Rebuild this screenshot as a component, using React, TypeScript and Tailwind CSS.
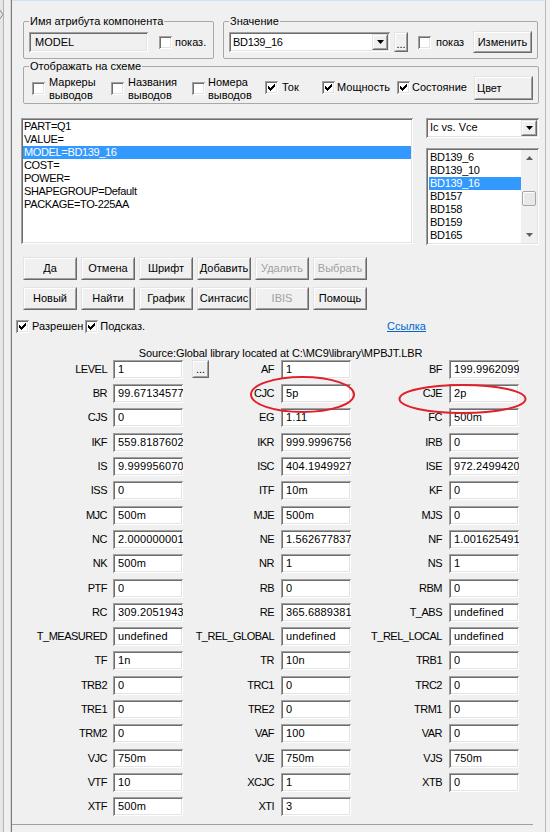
import React from "react";

const SUNKEN =
  "shadow-[inset_1px_1px_#a0a0a0,inset_-1px_-1px_#ffffff,inset_2px_2px_#6e6e6e,inset_-2px_-2px_#e3e3e3]";

const CHECK_PIXELS: [number, number, number][] = [
  [6, 0, 1],
  [5, 1, 2],
  [0, 2, 1],
  [4, 2, 3],
  [0, 3, 2],
  [3, 3, 3],
  [0, 4, 5],
  [1, 5, 3],
  [2, 6, 1],
];

function CheckBox({ checked = false }: { checked?: boolean }) {
  return (
    <div className={`w-[13px] h-[13px] shrink-0 bg-white relative ${SUNKEN}`}>
      {checked && (
        <svg
          className="absolute left-[3px] top-[3px]"
          width="7"
          height="7"
          viewBox="0 0 7 7"
          shapeRendering="crispEdges"
        >
          {CHECK_PIXELS.map(([x, y, w], i) => (
            <rect key={i} x={x} y={y} width={w} height={1} fill="#000" />
          ))}
        </svg>
      )}
    </div>
  );
}

/* Classic raised 3D frame drawn with two nested borders */
function Raised({
  className,
  inner = "",
  children,
}: {
  className: string;
  inner?: string;
  children?: React.ReactNode;
}) {
  return (
    <div
      className={`shrink-0 bg-[#f0f0f0] border border-t-[#e3e3e3] border-l-[#e3e3e3] border-b-[#696969] border-r-[#696969] ${className}`}
    >
      <div
        className={`w-full h-full border border-t-white border-l-white border-b-[#a0a0a0] border-r-[#a0a0a0] ${inner}`}
      >
        {children}
      </div>
    </div>
  );
}

function DropBtn() {
  return (
    <Raised className="w-[16px] h-[16px]" inner="flex items-center justify-center">
      <svg width="7" height="4" viewBox="0 0 7 4">
        <path d="M0 0h7L3.5 4z" fill="#000" />
      </svg>
    </Raised>
  );
}

function Btn({
  label,
  disabled = false,
}: {
  label: string;
  disabled?: boolean;
}) {
  return (
    <Raised
      className="w-[54px] h-[23px]"
      inner={`text-center leading-[19px] ${disabled ? "text-[#a0a0a0]" : "text-black"}`}
    >
      {label}
    </Raised>
  );
}

function Field({ value }: { value: string }) {
  return (
    <div
      className={`h-[19px] bg-white ${SUNKEN} pl-[5px] pr-[2px] leading-[19px] overflow-hidden whitespace-nowrap tracking-[0.15px]`}
    >
      {value}
    </div>
  );
}

type Cell = [string, string] | null;

const ROWS: Cell[][] = [
  [["LEVEL", "1"], ["AF", "1"], ["BF", "199.9962099"]],
  [["BR", "99.67134577"], ["CJC", "5p"], ["CJE", "2p"]],
  [["CJS", "0"], ["EG", "1.11"], ["FC", "500m"]],
  [["IKF", "559.8187602"], ["IKR", "999.9996756"], ["IRB", "0"]],
  [["IS", "9.999956070"], ["ISC", "404.1949927"], ["ISE", "972.2499420"]],
  [["ISS", "0"], ["ITF", "10m"], ["KF", "0"]],
  [["MJC", "500m"], ["MJE", "500m"], ["MJS", "0"]],
  [["NC", "2.000000001"], ["NE", "1.562677837"], ["NF", "1.001625491"]],
  [["NK", "500m"], ["NR", "1"], ["NS", "1"]],
  [["PTF", "0"], ["RB", "0"], ["RBM", "0"]],
  [["RC", "309.2051943"], ["RE", "365.6889381"], ["T_ABS", "undefined"]],
  [
    ["T_MEASURED", "undefined"],
    ["T_REL_GLOBAL", "undefined"],
    ["T_REL_LOCAL", "undefined"],
  ],
  [["TF", "1n"], ["TR", "10n"], ["TRB1", "0"]],
  [["TRB2", "0"], ["TRC1", "0"], ["TRC2", "0"]],
  [["TRE1", "0"], ["TRE2", "0"], ["TRM1", "0"]],
  [["TRM2", "0"], ["VAF", "100"], ["VAR", "0"]],
  [["VJC", "750m"], ["VJE", "750m"], ["VJS", "750m"]],
  [["VTF", "10"], ["XCJC", "1"], ["XTB", "0"]],
  [["XTF", "500m"], ["XTI", "3"], null],
];

const ATTRS = [
  "PART=Q1",
  "VALUE=",
  "MODEL=BD139_16",
  "COST=",
  "POWER=",
  "SHAPEGROUP=Default",
  "PACKAGE=TO-225AA",
];

const MODELS = [
  "BD139_6",
  "BD139_10",
  "BD139_16",
  "BD157",
  "BD158",
  "BD159",
  "BD165",
];

export default function App() {
  return (
    <div className="w-[550px] h-[832px] bg-[#f0f0f0] relative overflow-hidden flex font-['Liberation_Sans',Arial,sans-serif] text-[11px] leading-[13px] text-black">
      {/* left splitter strip */}
      <div className="w-[12px] shrink-0 flex">
        <div className="w-[4px] bg-[#e6e6e6] border-r border-[#b4b4b4] flex flex-col">
          <svg width="3" height="32" viewBox="0 0 3 32">
            <path d="M-1 9L3 14.5L-1 20" fill="none" stroke="#8a8a8a" strokeWidth="1" />
          </svg>
        </div>
        <div className="flex-1" />
        <div className="w-[1px] bg-[#d8d8d8]" />
        <div className="w-[1px] bg-[#7a7a7a]" />
      </div>

      {/* main dialog */}
      <div className="w-[534px] shrink-0 flex flex-col border-t border-[#cfe3f3] border-r border-r-[#b8b8b8]">
        {/* Row A */}
        <div className="flex mt-[14px] ml-[11px]">
          <fieldset className="w-[191px] h-[44px] border border-[#a8a8a8] rounded-[2px] px-[5px] pt-[4px]">
            <legend className="px-[1px] leading-[13px]">Имя атрибута компонента</legend>
            <div className="flex items-center">
              <div
                className={`w-[119px] h-[20px] bg-[#f0f0f0] ${SUNKEN} pl-[6px] leading-[20px]`}
              >
                MODEL
              </div>
              <div className="ml-[11px]">
                <CheckBox />
              </div>
              <span className="ml-[3px]">показ.</span>
            </div>
          </fieldset>
          <fieldset className="ml-[9px] w-[315px] h-[44px] border border-[#a8a8a8] rounded-[2px] px-[5px] pt-[3px]">
            <legend className="px-[1px] leading-[13px]">Значение</legend>
            <div className="flex items-start">
              <div
                className={`w-[161px] h-[20px] bg-white ${SUNKEN} pl-[4px] pr-[2px] flex items-center mt-[1px]`}
              >
                <span className="tracking-[-0.3px]">BD139_16</span>
                <div className="ml-auto">
                  <DropBtn />
                </div>
              </div>
              <Raised
                className="ml-[4px] mt-[1px] w-[14px] h-[20px]"
                inner="flex items-end justify-center pb-[2px] leading-[8px]"
              >
                ...
              </Raised>
              <div className="ml-[10px] mt-[5px]">
                <CheckBox />
              </div>
              <span className="ml-[5px] mt-[5px]">показ</span>
              <Raised className="ml-auto w-[59px] h-[22px]" inner="text-center leading-[18px]">
                Изменить
              </Raised>
            </div>
          </fieldset>
        </div>

        {/* Row B */}
        <fieldset className="mt-[1px] ml-[11px] w-[515px] h-[45px] border border-[#a8a8a8] rounded-[2px] pl-[8px] pr-[5px] pt-[3px]">
          <legend className="ml-[-3px] px-[1px] leading-[13px]">Отображать на схеме</legend>
          <div className="flex items-start h-[24px]">
            <div className="w-[79px] flex items-start">
              <div className="mt-[6px]">
                <CheckBox />
              </div>
              <span className="ml-[4px] leading-[13px]">
                Маркеры
                <br />
                выводов
              </span>
            </div>
            <div className="w-[81px] flex items-start">
              <div className="mt-[6px]">
                <CheckBox />
              </div>
              <span className="ml-[4px] leading-[13px]">
                Названия
                <br />
                выводов
              </span>
            </div>
            <div className="w-[73px] flex items-start">
              <div className="mt-[6px]">
                <CheckBox />
              </div>
              <span className="ml-[3px] leading-[13px]">
                Номера
                <br />
                выводов
              </span>
            </div>
            <div className="w-[57px] flex items-center mt-[5px] h-[13px]">
              <CheckBox checked />
              <span className="ml-[4px]">Ток</span>
            </div>
            <div className="w-[75px] flex items-center mt-[5px] h-[13px]">
              <CheckBox checked />
              <span className="ml-[2px]">Мощность</span>
            </div>
            <div className="w-[77px] flex items-center mt-[5px] h-[13px]">
              <CheckBox checked />
              <span className="ml-[2px]">Состояние</span>
            </div>
            <Raised className="w-[59px] h-[24px]" inner="pl-[1px] pt-[4px] leading-[13px]">
              Цвет
            </Raised>
          </div>
        </fieldset>

        {/* Row C: lists */}
        <div className="flex mt-[14px] ml-[9px]">
          <div className={`w-[392px] h-[126px] bg-white ${SUNKEN} p-[2px]`}>
            {ATTRS.map((a, i) => (
              <div
                key={a}
                className={`h-[13px] pl-[1px] whitespace-nowrap tracking-[-0.35px] ${
                  i === 2 ? "bg-[#3399ff] text-white" : ""
                }`}
              >
                {a}
              </div>
            ))}
          </div>
          <div className="ml-[13px] w-[113px] flex flex-col">
            <div
              className={`h-[20px] bg-white ${SUNKEN} pl-[4px] pr-[2px] flex items-center`}
            >
              <span>Ic vs. Vce</span>
              <div className="ml-auto">
                <DropBtn />
              </div>
            </div>
            <div className={`mt-[10px] h-[97px] bg-white ${SUNKEN} p-[2px] flex`}>
              <div className="flex-1 pt-[1px] pl-[1px]">
                {MODELS.map((m, i) => (
                  <div
                    key={m}
                    className={`h-[13px] pl-[1px] whitespace-nowrap tracking-[-0.3px] ${
                      i === 2 ? "bg-[#3399ff] text-white" : ""
                    }`}
                  >
                    {m}
                  </div>
                ))}
              </div>
              <div className="w-[16px] bg-[#f0f0f0] flex flex-col">
                <div className="h-[16px] flex items-center justify-center">
                  <svg width="7" height="4" viewBox="0 0 7 4">
                    <path d="M3.5 0L7 4H0z" fill="#606060" />
                  </svg>
                </div>
                <div className="h-[25px]" />
                <div className="h-[15px] mx-[1px] bg-[#e8e8e8] border border-[#a6a6a6] rounded-[2px] shadow-[inset_1px_1px_#ffffff]" />
                <div className="flex-1" />
                <div className="h-[16px] flex items-center justify-center">
                  <svg width="7" height="4" viewBox="0 0 7 4">
                    <path d="M0 0h7L3.5 4z" fill="#606060" />
                  </svg>
                </div>
              </div>
            </div>
          </div>
        </div>

        {/* Row D: buttons */}
        <div className="flex gap-[4px] mt-[12px] ml-[11px]">
          <Btn label="Да" />
          <Btn label="Отмена" />
          <Btn label="Шрифт" />
          <Btn label="Добавить" />
          <Btn label="Удалить" disabled />
          <Btn label="Выбрать" disabled />
        </div>
        <div className="flex gap-[4px] mt-[7px] ml-[11px]">
          <Btn label="Новый" />
          <Btn label="Найти" />
          <Btn label="График" />
          <Btn label="Синтасис" />
          <Btn label="IBIS" disabled />
          <Btn label="Помощь" />
        </div>

        {/* Row E */}
        <div className="flex items-center h-[13px] mt-[10px]">
          <div className="w-[375px] flex items-center pl-[4px]">
            <CheckBox checked />
            <span className="ml-[3px]">Разрешен</span>
            <div className="ml-[2px]">
              <CheckBox checked />
            </div>
            <span className="ml-[2px]">Подсказ.</span>
          </div>
          <span className="text-[#0066cc] underline underline-offset-[1px]">Ссылка</span>
        </div>

        {/* Row F */}
        <div className="mt-[14px] h-[13px] text-center pl-[4px] whitespace-nowrap tracking-[-0.1px]">
          Source:Global library located at C:\MC9\library\MPBJT.LBR
        </div>

        {/* Row G: parameters grid */}
        <div className="grid grid-cols-[101px_70px_98px_70px_98px_70px] auto-rows-[19px] gap-y-[5.3px]">
          {ROWS.map((row, i) => (
            <React.Fragment key={i}>
              {row.map((c, j) =>
                c ? (
                  <React.Fragment key={j}>
                    <div
                      className={`flex items-center justify-end whitespace-nowrap ${
                        j === 0 ? "pr-[6px]" : "pr-[7px]"
                      }`}
                    >
                      {i === 0 && j === 1 && (
                        <Raised
                          className="mr-auto ml-[9px] self-start w-[17px] h-[18px]"
                          inner="flex items-end justify-center pb-[3px] leading-[8px]"
                        >
                          ...
                        </Raised>
                      )}
                      <span className="tracking-[-0.5px]">{c[0]}</span>
                    </div>
                    <Field value={c[1]} />
                  </React.Fragment>
                ) : (
                  <React.Fragment key={j}>
                    <div />
                    <div />
                  </React.Fragment>
                )
              )}
            </React.Fragment>
          ))}
        </div>

        {/* bottom panel edge */}
        <div className="mt-[8px] w-[521px] h-[8px] border-t border-[#a0a0a0]" />
      </div>

      {/* red annotation ellipses */}
      <svg
        className="absolute left-0 top-0 pointer-events-none"
        width="550"
        height="832"
        viewBox="0 0 550 832"
      >
        <ellipse cx="302.5" cy="394.5" rx="51.5" ry="17.5" fill="none" stroke="#e0202a" strokeWidth="2" />
        <ellipse cx="462.5" cy="399" rx="63" ry="14" fill="none" stroke="#e0202a" strokeWidth="2" />
      </svg>
    </div>
  );
}
